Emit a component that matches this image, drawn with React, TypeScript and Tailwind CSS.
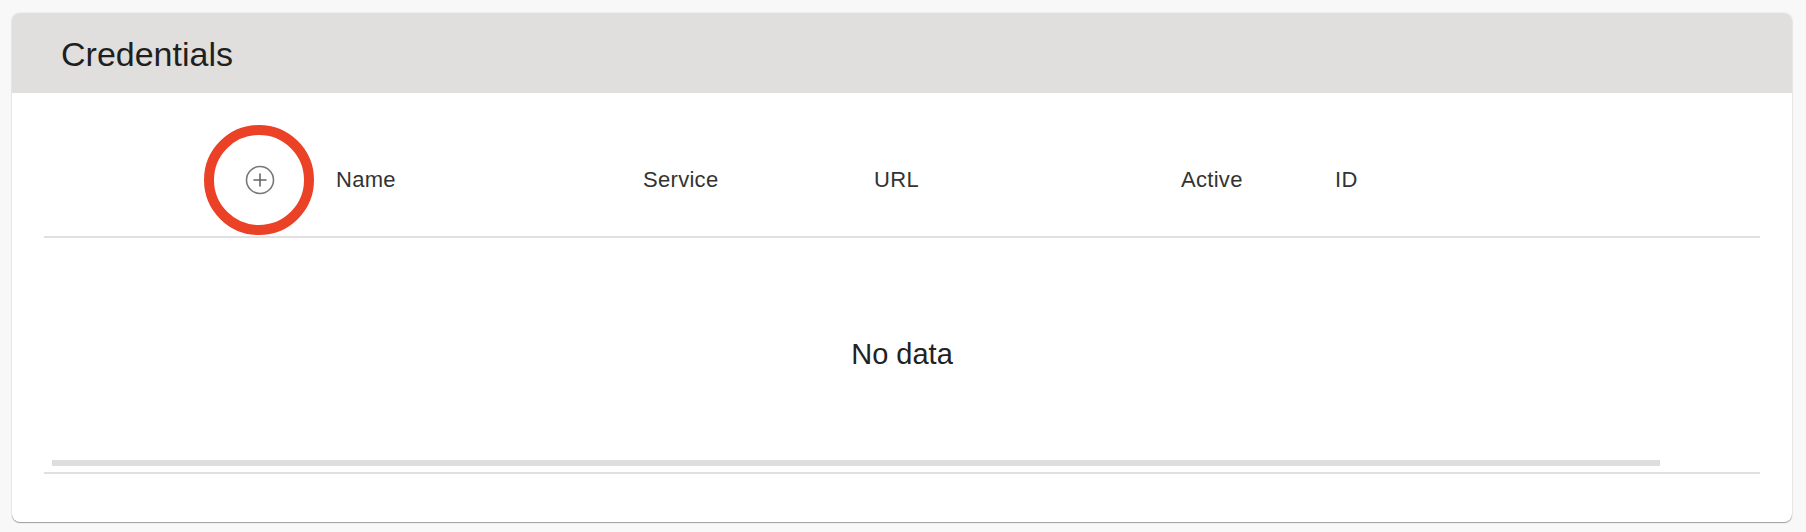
import React from 'react';

const columns = [
  { label: 'Name', width: 'w-[307px]' },
  { label: 'Service', width: 'w-[231px]' },
  { label: 'URL', width: 'w-[307px]' },
  { label: 'Active', width: 'w-[154px]' },
  { label: 'ID', width: 'flex-1' },
];

const AddIcon: React.FC = () => (
  <svg width="30" height="30" viewBox="0 0 30 30" fill="none">
    <circle cx="15" cy="15" r="13.5" stroke="#777" strokeWidth="1.6" />
    <path d="M15 9v12M9 15h12" stroke="#666" strokeWidth="1.6" strokeLinecap="round" />
  </svg>
);

const App: React.FC = () => {
  return (
    <div className="min-h-[532px] w-full bg-[#f8f8f8] pt-[13px] pl-[12px] pr-[14px] pb-[10px] font-['Liberation_Sans',Arial,sans-serif]">
      <div className="relative rounded-[8px] bg-white shadow-[0_1px_1px_rgba(0,0,0,0.35),0_0_2px_rgba(0,0,0,0.12)] overflow-hidden">
        {/* header bar */}
        <div className="h-[80px] bg-[#e0dfdd] flex items-center pl-[49px]">
          <h1 className="text-[34px] leading-none text-[#1f1f1f] pt-[1px]">Credentials</h1>
        </div>

        {/* table */}
        <div className="mx-[32px] mt-[30px]">
          <div className="flex items-center h-[115px] border-b-2 border-[#e0e0e0] text-[22px] tracking-[0.3px] text-[#333]">
            <div className="w-[292px] flex justify-end pr-[61px]">
              <button className="flex items-center justify-center">
                <AddIcon />
              </button>
            </div>
            {columns.map((c) => (
              <div key={c.label} className={c.width}>
                {c.label}
              </div>
            ))}
          </div>

          <div className="h-[222px] flex items-center justify-center pt-[12px]">
            <span className="text-[29px] text-[#222]">No data</span>
          </div>

          <div className="ml-[8px] w-[1608px] h-[6px] bg-[#dedede]" />
          <div className="mt-[6px] h-[2px] bg-[#e0e0e0]" />
          <div className="h-[48px]" />
        </div>

        {/* highlight annotation */}
        <div className="absolute left-[192px] top-[112px] w-[110px] h-[110px] rounded-full border-[10px] border-[#eb4127] pointer-events-none" />
      </div>
    </div>
  );
};

export default App;
